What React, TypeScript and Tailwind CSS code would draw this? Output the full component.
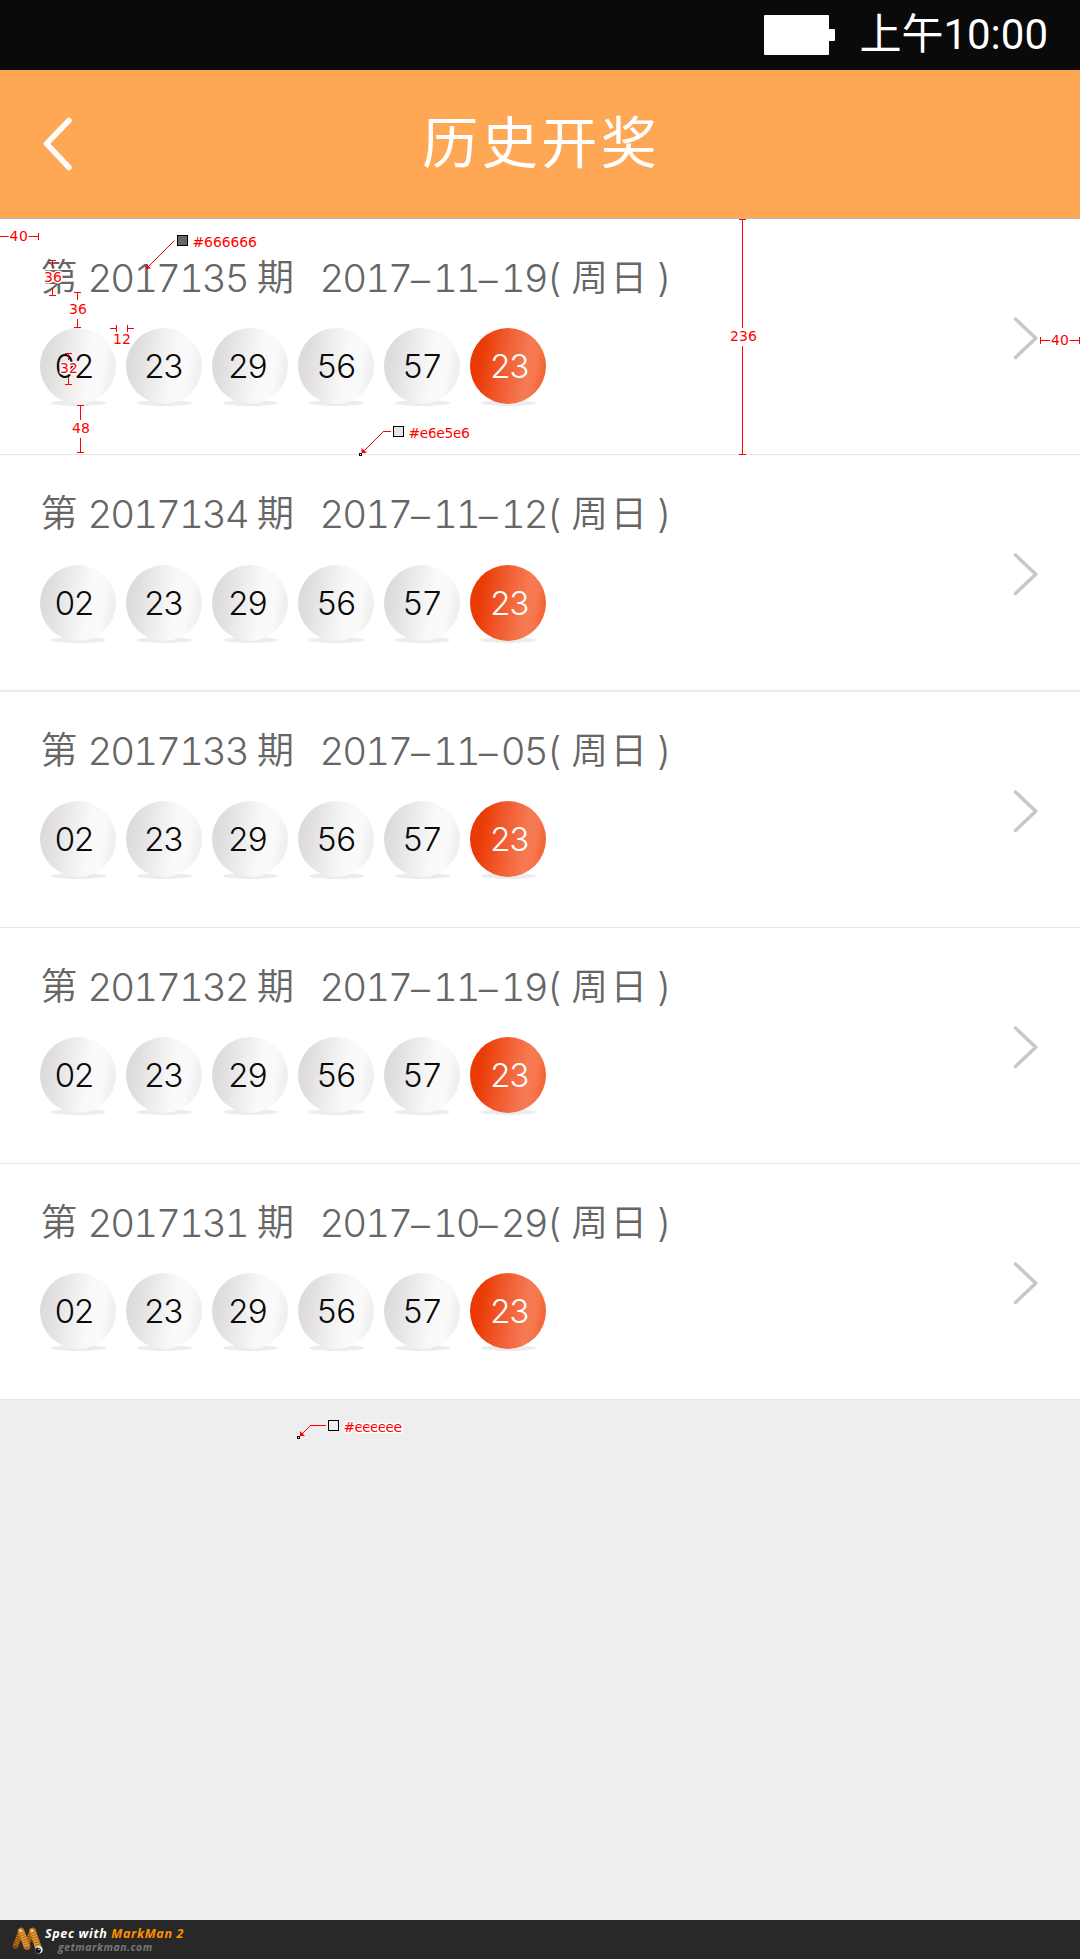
import React from "react";

type Draw = { issue: string; date: string; h: string; ballGap: string };

const draws: Draw[] = [
  { issue: "2017135", date: "2017–11–19", h: "h-[236px] border-b border-[#e6e5e6]", ballGap: "mt-[28px]" },
  { issue: "2017134", date: "2017–11–12", h: "h-[237px] border-b-2 border-[#ebebeb]", ballGap: "mt-[29px]" },
  { issue: "2017133", date: "2017–11–05", h: "h-[236px] border-b border-[#e6e5e6]", ballGap: "mt-[28px]" },
  { issue: "2017132", date: "2017–11–19", h: "h-[236px] border-b border-[#e6e5e6]", ballGap: "mt-[28px]" },
  { issue: "2017131", date: "2017–10–29", h: "h-[236px] border-b border-[#e6e5e6]", ballGap: "mt-[28px]" },
];

const balls = [
  { n: "02", pad: "left-[-4.5px]" },
  { n: "23", pad: "left-[-1px]" },
  { n: "29", pad: "left-[-3px]" },
  { n: "56", pad: "left-[-0.5px]" },
  { n: "57", pad: "left-[-0.5px]" },
  { n: "23", pad: "left-[1px]" },
];

function Ball({ n, pad, red }: { n: string; pad: string; red: boolean }) {
  return (
    <div className="relative size-[76px]">
      <div className="absolute left-[11px] top-[72px] h-[6px] w-[55px] rounded-[50%] bg-[#ececec] blur-[0.7px]" />
      <div
        className={
          red
            ? "relative flex size-[76px] items-center justify-center rounded-full bg-[linear-gradient(98deg,#e93700_0%,#ea3c07_18%,#f26035_48%,#f57a53_72%,#f5784f_82%,#f65c2b_96%)] text-white"
            : "relative flex size-[76px] items-center justify-center rounded-full bg-[linear-gradient(98deg,#d9d7d8_0%,#e0dedf_18%,#efeeef_42%,#f9f9f9_62%,#fafafa_78%,#f0f0f0_90%,#ececec_100%)] text-[#0a0a0a]"
        }
      >
        <span className={`relative font-[Inter] text-[33px] leading-none font-light tracking-[-2.1px] tabular-nums ${pad}`}>{n}</span>
      </div>
    </div>
  );
}

function DateText({ value }: { value: string }) {
  return (
    <span className="flex w-[227px] items-center tracking-[-2.05px]">
      {value.split("–").map((part, i) => (
        <React.Fragment key={i}>
          {i > 0 && (
            <span className="w-[22.4px] font-['Liberation_Sans'] text-[34px] tracking-normal">–</span>
          )}
          <span>{part}</span>
        </React.Fragment>
      ))}
    </span>
  );
}

function Row({ d }: { d: Draw }) {
  return (
    <div className={`flex items-start justify-between bg-white ${d.h}`}>
      <div className="pl-10 pt-[37px]">
        <div className="flex h-11 items-center font-[Inter,'Noto_Sans_CJK_SC',sans-serif] text-[38.5px] leading-[44px] font-light whitespace-pre text-[#666666] tabular-nums">
          <span className="w-[47.5px] pl-[0.5px] text-[37px] font-[350]">第</span>
          <span className="w-[169.5px] tracking-[-2.05px]">{d.issue}</span>
          <span className="w-[62.5px] text-[37px] font-[350]">期</span>
          <DateText value={d.date} />
          <span className="w-[25px]">(</span>
          <span className="w-[85.5px] text-[36.5px] font-[350] tracking-[2.5px]">周日</span>
          <span>)</span>
        </div>
        <div className={`flex gap-[10px] ${d.ballGap}`}>
          {balls.map((b, i) => (
            <Ball key={i} n={b.n} pad={b.pad} red={i === 5} />
          ))}
        </div>
      </div>
      <svg className="mt-[97px] mr-[39px] h-[44px] w-[28px]" viewBox="0 0 28 44" fill="none">
        <path d="M2.5 3L22.8 22.3L2.5 41.5" stroke="#c8c8cc" strokeWidth="3.5" strokeLinecap="round" strokeLinejoin="round" />
      </svg>
    </div>
  );
}

/** Measurement and colour call-outs laid over the screen. */
function Annotations() {
  const halo = "stroke-white stroke-[3px] [paint-order:stroke] [stroke-linejoin:round]";
  return (
    <svg className="pointer-events-none absolute inset-0 h-[1959px] w-[1080px]" viewBox="0 0 1080 1959" fill="none">
      <g stroke="#f00" strokeWidth="1" shapeRendering="crispEdges">
        <path d="M0 236.5H9M28 236.5H38M38.5 233V240" />
        <path d="M49 260.5H56M52.5 260V268M52.5 288V295M49 295.5H56" />
        <path d="M74 292.5H81M77.5 292V300M77.5 319V327M74 327.5H81" />
        <path d="M110 328.5H116M116.5 325V332M127.5 325V332M128 328.5H134" />
        <path d="M65 353.5H72M68.5 353V360M68.5 377V384M65 384.5H72" />
        <path d="M77 405.5H84M80.5 405V420M80.5 438V452M77 452.5H84" />
        <path d="M739 219.5H746M742.5 219V328M742.5 346V454M739 454.5H746" />
        <path d="M1040.5 337V344M1041 340.5H1050M1069 340.5H1079M1079.5 337V344" />
        <path d="M383 431.5H391" />
        <path d="M310 1425.5H326" />
      </g>
      <g stroke="#f00" strokeWidth="1">
        <path d="M174.5 240.5L148 267M383.5 431.5L364 451M310.5 1425.5L301 1435" />
      </g>
      <g fill="#f00">
        <path d="M146 269V264L151 268.5Z" />
        <path d="M361.5 453V448L367 453Z" />
        <path d="M300 1436V1431L305 1436Z" />
      </g>
      <g stroke="#000" shapeRendering="crispEdges">
        <rect x="177.5" y="235.5" width="10" height="10" fill="#666666" />
        <rect x="393.5" y="426.5" width="10" height="10" fill="#e6e5e6" />
        <rect x="328.5" y="1420.5" width="10" height="10" fill="#eeeeee" />
        <rect x="359.5" y="453.5" width="2" height="2" fill="#fff" />
        <rect x="297.5" y="1436.5" width="2" height="2" fill="#fff" />
      </g>
      <g className="font-['DejaVu_Sans']" fontSize="14" fill="#f00">
        <text className={halo} x="9.5" y="241" textLength="18.5">40</text>
        <text className={halo} x="44" y="282" textLength="18">36</text>
        <text className={halo} x="69" y="314" textLength="18">36</text>
        <text className={halo} x="113" y="344" textLength="18">12</text>
        <text className={halo} x="60" y="373" textLength="18">32</text>
        <text className={halo} x="72" y="433" textLength="18">48</text>
        <text className={halo} x="730" y="341" textLength="27">236</text>
        <text className={halo} x="1051" y="345" textLength="18">40</text>
        <text className={halo} x="192.5" y="247" textLength="64.5">#666666</text>
        <text className={halo} x="408.5" y="438" textLength="61.5">#e6e5e6</text>
        <text className={halo} x="343.5" y="1432" textLength="58.5">#eeeeee</text>
      </g>
    </svg>
  );
}

function MarkManLogo() {
  return (
    <svg className="h-[30px] w-[33px]" viewBox="0 0 33 30" fill="none">
      <g strokeLinecap="round">
        <path d="M9 7L3.5 21" stroke="#8a4a0e" strokeWidth="6" />
        <path d="M20 7L14 21" stroke="#8a4a0e" strokeWidth="6" />
        <path d="M8 8L3.5 20M19 8L14.5 19" stroke="#c07a24" strokeWidth="4.5" strokeLinecap="butt" strokeDasharray="1.2 1.2" />
        <path d="M9 6L15 21.5" stroke="#b86e1c" strokeWidth="6.8" />
        <path d="M20.5 6L26 21.5" stroke="#b86e1c" strokeWidth="6.8" />
        <path d="M9 6L15 22M20.5 6L26 22" stroke="#e3a145" strokeWidth="5.6" strokeLinecap="butt" strokeDasharray="1.3 1.2" />
      </g>
      <circle cx="8.5" cy="5.5" r="1.3" fill="#ffdf9a" />
      <circle cx="20" cy="5.5" r="1.3" fill="#ffdf9a" />
      <circle cx="26.8" cy="24.8" r="3.8" fill="#f4f4f4" />
      <circle cx="26" cy="25.2" r="2.8" fill="#111" />
      <circle cx="27" cy="24.3" r="0.8" fill="#fff" />
    </svg>
  );
}

export default function App() {
  return (
    <div className="relative flex h-[1959px] w-[1080px] flex-col overflow-hidden bg-[#eeeeee] font-[Roboto,'Noto_Sans_CJK_SC',sans-serif]">
      <div className="flex h-[70px] shrink-0 items-center justify-end bg-[#0a0a0a] pr-[32px] text-white">
        <div className="flex items-center">
          <div className="h-10 w-[65px] rounded-[1px] bg-white" />
          <div className="h-3 w-[6px] rounded-r-[1px] bg-white" />
        </div>
        <div className="ml-[24px] flex items-center text-[42px] leading-[60px]">
          <span>上午</span>
          <span>10:00</span>
        </div>
      </div>
      <header className="relative flex h-[149px] shrink-0 items-center justify-center border-b border-[#bcbcbc] bg-[#fea855] text-white">
        <svg className="absolute left-[40px] top-[44px] h-[60px] w-[36px]" viewBox="0 0 36 60" fill="none">
          <path d="M29 6.5L6.5 29.7L29 53.5" stroke="#fff" strokeWidth="5.5" strokeLinecap="round" strokeLinejoin="round" />
        </svg>
        <h1 className="pl-[2.5px] text-[56px] leading-[80px] tracking-[3.5px]">历史开奖</h1>
      </header>
      <main>
        {draws.map((d) => (
          <Row key={d.issue} d={d} />
        ))}
      </main>
      <footer className="mt-auto flex h-[39px] items-start bg-[#282828] pl-[12px] pt-[5px]">
        <MarkManLogo />
        <div className="font-['Open_Sans'] font-bold italic">
          <p className="text-[12.5px] leading-[18px] tracking-[0.65px] whitespace-nowrap text-white">
            Spec with <span className="text-[#ff9000]">MarkMan 2</span>
          </p>
          <p className="pl-[13px] text-[10.5px] leading-[8px] tracking-[0.5px] text-[#777777]">getmarkman.com</p>
        </div>
      </footer>
      <Annotations />
    </div>
  );
}
